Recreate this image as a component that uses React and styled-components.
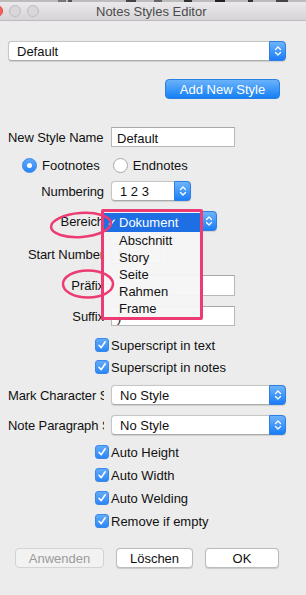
import styled, { createGlobalStyle } from "styled-components";

const GlobalStyle = createGlobalStyle`
  html, body { margin: 0; padding: 0; background: #ececec; }
  body {
    font-family: "Liberation Sans", Arial, sans-serif;
    font-size: 13px;
    color: #111;
  }
`;

const Window = styled.div`
  position: relative;
  width: 306px;
  height: 595px;
  overflow: hidden;
  background: #ececec;
`;

const TitleBar = styled.div`
  display: flex;
  align-items: center;
  height: 18px;
  background: linear-gradient(#ebe9eb, #d6d4d6);
  border-bottom: 1px solid #bdbbbd;
`;

const Lights = styled.div`
  display: flex;
  gap: 6px;
  margin-left: -9px;
`;

const Light = styled.span`
  width: 12px;
  height: 12px;
  border-radius: 50%;
  box-sizing: border-box;
  background: ${(p) => (p.$red ? "#fc5f57" : "#d9d7d9")};
  border: 1px solid ${(p) => (p.$red ? "#de4a42" : "#bfbdbf")};
`;

const Title = styled.div`
  margin-left: 57px;
  color: #4b4b4b;
  font-size: 13px;
`;

const Row = styled.div`
  display: flex;
  align-items: center;
  height: ${(p) => p.$h || 20}px;
  margin-top: ${(p) => p.$mt}px;
  padding-left: ${(p) => p.$pl || 0}px;
  padding-right: ${(p) => p.$pr || 0}px;
  justify-content: ${(p) => (p.$end ? "flex-end" : "flex-start")};
  gap: ${(p) => p.$gap || 0}px;
`;

const Label = styled.div`
  flex-shrink: 0;
  width: 96px;
  margin: 0 7px 0 8px;
  white-space: nowrap;
  overflow: hidden;
  letter-spacing: -0.1px;
  text-align: ${(p) => (p.$left ? "left" : "right")};
  direction: ${(p) => (p.$left ? "ltr" : "rtl")};
`;

const Field = styled.div`
  position: relative;
  display: flex;
  align-items: center;
  width: ${(p) => p.$w}px;
  height: 100%;
`;

const TextInput = styled.div`
  box-sizing: border-box;
  width: ${(p) => p.$w}px;
  height: 100%;
  padding: 2px 5px 0;
  display: flex;
  align-items: center;
  background: #fff;
  border: 1px solid #b8b8b8;
  border-top-color: #a8a8a8;
`;

const SelectBox = styled.div`
  box-sizing: border-box;
  position: relative;
  display: flex;
  align-items: center;
  width: ${(p) => p.$w}px;
  height: 100%;
  padding-left: 8px;
  background: #fff;
  border: 1px solid #c6c6c6;
  border-bottom-color: #a9a9a9;
  border-radius: 4px;
  box-shadow: 0 0.5px 1px rgba(0, 0, 0, 0.12);
`;

const Stepper = styled.div`
  position: absolute;
  top: -1px;
  right: -1px;
  bottom: -1px;
  width: 17px;
  display: flex;
  align-items: center;
  justify-content: center;
  border-radius: 0 4px 4px 0;
  background: linear-gradient(#6db3fb, #1a7ef6);
  border: 1px solid #2c7fe6;
  box-sizing: border-box;
`;

const PlainStepper = styled.div`
  margin-left: 4px;
  display: flex;
  align-items: center;
  opacity: 0.5;
`;

const Arrows = ({ color = "#fff" }) => (
  <svg width="8" height="12" viewBox="0 0 8 12">
    <path
      d="M1.5 4.5 L4 2 L6.5 4.5 M1.5 7.5 L4 10 L6.5 7.5"
      fill="none"
      stroke={color}
      strokeWidth="1.3"
      strokeLinecap="round"
      strokeLinejoin="round"
    />
  </svg>
);

const Select = ({ w, children }) => (
  <SelectBox $w={w}>
    {children}
    <Stepper>
      <Arrows />
    </Stepper>
  </SelectBox>
);

const BlueButton = styled.div`
  box-sizing: border-box;
  width: 115px;
  height: 20px;
  display: flex;
  align-items: center;
  justify-content: center;
  color: #fff;
  font-size: 13px;
  border-radius: 4px;
  background: linear-gradient(#6ab2fb, #1580f4);
  border: 1px solid #2a7fe4;
`;

const Radio = styled.span`
  box-sizing: border-box;
  display: inline-flex;
  align-items: center;
  justify-content: center;
  width: 15px;
  height: 15px;
  border-radius: 50%;
  margin-right: ${(p) => p.$mr}px;
  background: ${(p) => (p.$on ? "linear-gradient(#5fa9fa, #2a86f6)" : "#fff")};
  border: 1px solid ${(p) => (p.$on ? "#3887ea" : "#a8a8a8")};
  &::after {
    content: "";
    display: ${(p) => (p.$on ? "block" : "none")};
    width: 5px;
    height: 5px;
    border-radius: 50%;
    background: #fff;
  }
`;

const RadioText = styled.span`
  margin-right: ${(p) => p.$mr || 0}px;
`;

const CheckBoxMark = styled.span`
  box-sizing: border-box;
  display: inline-flex;
  align-items: center;
  justify-content: center;
  width: 14px;
  height: 14px;
  margin-right: 2px;
  border-radius: 3px;
  background: linear-gradient(#63abfa, #2b87f6);
  border: 1px solid #3a88e8;
`;

const Check = ({ label, mt }) => (
  <Row $mt={mt} $pl={95}>
    <CheckBoxMark>
      <svg width="10" height="10" viewBox="0 0 10 10">
        <path
          d="M2 5.3 L4.2 7.6 L8.2 1.8"
          fill="none"
          stroke="#fff"
          strokeWidth="1.6"
          strokeLinecap="round"
          strokeLinejoin="round"
        />
      </svg>
    </CheckBoxMark>
    {label}
  </Row>
);

const PushButton = styled.div`
  box-sizing: border-box;
  width: ${(p) => p.$w}px;
  height: 20px;
  display: flex;
  align-items: center;
  justify-content: center;
  border-radius: 4px;
  background: ${(p) => (p.$disabled ? "#f2f2f2" : "#fff")};
  color: ${(p) => (p.$disabled ? "#9b9b9b" : "#111")};
  border: 1px solid ${(p) => (p.$disabled ? "#d3d3d3" : "#bcbcbc")};
  box-shadow: ${(p) => (p.$disabled ? "none" : "0 0.5px 1px rgba(0,0,0,0.15)")};
`;

const Menu = styled.div`
  position: absolute;
  left: -10px;
  top: -2px;
  width: 102px;
  height: 111px;
  box-sizing: border-box;
  padding-top: 1px;
  background: rgba(246, 246, 246, 0.95);
  border: 3px solid #ec3c73;
  border-radius: 2px;
  z-index: 2;
`;

const MenuItem = styled.div`
  display: flex;
  align-items: center;
  height: ${(p) => (p.$active ? 19 : 17)}px;
  padding-left: 3px;
  background: ${(p) => (p.$active ? "#1d6fe3" : "transparent")};
  color: ${(p) => (p.$active ? "#fff" : "#111")};
`;

const Tick = styled.span`
  width: 12px;
  font-size: 12px;
`;

const Annotation = styled.svg`
  position: absolute;
  left: ${(p) => p.$x}px;
  top: ${(p) => p.$y}px;
  z-index: 3;
  pointer-events: none;
`;

const menuItems = ["Dokument", "Abschnitt", "Story", "Seite", "Rahmen", "Frame"];

export default function App() {
  return (
    <>
      <GlobalStyle />
      <Window>
        <svg width="306" height="2" style={{ display: "block" }}>
          <rect width="306" height="2" fill="#bdbcbd" />
          <rect x="58" width="8" height="2" fill="#777" />
          <rect x="68" width="4" height="2" fill="#555" />
          <rect x="126" width="10" height="2" fill="#444" />
          <rect x="154" width="8" height="2" fill="#666" />
          <rect x="184" width="8" height="2" fill="#333" />
          <rect x="215" width="10" height="2" fill="#222" />
          <rect x="248" width="5" height="2" fill="#333" />
          <rect x="276" width="12" height="2" fill="#444" />
        </svg>
        <TitleBar>
          <Lights>
            <Light $red />
            <Light />
            <Light />
          </Lights>
          <Title>Notes Styles Editor</Title>
        </TitleBar>

        <Row $mt={20} $pl={8}>
          <Select w={278}>Default</Select>
        </Row>

        <Row $mt={18} $end $pr={26}>
          <BlueButton>Add New Style</BlueButton>
        </Row>

        <Row $mt={28}>
          <Label $left>New Style Name</Label>
          <TextInput $w={124}>Default</TextInput>
        </Row>

        <Row $mt={9} $h={18} $pl={22}>
          <Radio $on $mr={5} />
          <RadioText $mr={13}>Footnotes</RadioText>
          <Radio $mr={5} />
          <RadioText>Endnotes</RadioText>
        </Row>

        <Row $mt={7}>
          <Label>Numbering</Label>
          <Select w={80}>1 2 3</Select>
        </Row>

        <Row $mt={10}>
          <Label>Bereich</Label>
          <Field $w={106}>
            <Select w={106}>Dokument</Select>
            <Menu>
              {menuItems.map((item, i) => (
                <MenuItem key={item} $active={i === 0}>
                  <Tick>{i === 0 ? "✓" : ""}</Tick>
                  {item}
                </MenuItem>
              ))}
            </Menu>
          </Field>
        </Row>

        <Row $mt={13}>
          <Label>Start Number</Label>
          <TextInput $w={50}>1</TextInput>
          <PlainStepper>
            <Arrows color="#888" />
          </PlainStepper>
        </Row>

        <Row $mt={11} $h={21}>
          <Label>Präfix</Label>
          <TextInput $w={124} />
        </Row>

        <Row $mt={10}>
          <Label>Suffix</Label>
          <TextInput $w={124}>)</TextInput>
        </Row>

        <Check mt={9} label="Superscript in text" />
        <Check mt={2} label="Superscript in notes" />

        <Row $mt={8}>
          <Label $left>Mark Character Style</Label>
          <Select w={175}>No Style</Select>
        </Row>

        <Row $mt={10}>
          <Label $left>Note Paragraph Style</Label>
          <Select w={175}>No Style</Select>
        </Row>

        <Check mt={7} label="Auto Height" />
        <Check mt={3} label="Auto Width" />
        <Check mt={3} label="Auto Welding" />
        <Check mt={3} label="Remove if empty" />

        <Row $mt={17} $pl={15} $gap={12}>
          <PushButton $w={89} $disabled>
            Anwenden
          </PushButton>
          <PushButton $w={77}>Löschen</PushButton>
          <PushButton $w={74}>OK</PushButton>
        </Row>

        <Annotation $x={48} $y={210} width="66" height="30" viewBox="0 0 66 30">
          <ellipse
            cx="33"
            cy="15"
            rx="30"
            ry="12"
            fill="none"
            stroke="#ec3c73"
            strokeWidth="2.5"
            transform="rotate(-4 33 15)"
          />
        </Annotation>
        <Annotation $x={60} $y={268} width="56" height="32" viewBox="0 0 56 32">
          <ellipse
            cx="28"
            cy="16"
            rx="25"
            ry="13.5"
            fill="none"
            stroke="#ec3c73"
            strokeWidth="2.5"
          />
        </Annotation>
      </Window>
    </>
  );
}
